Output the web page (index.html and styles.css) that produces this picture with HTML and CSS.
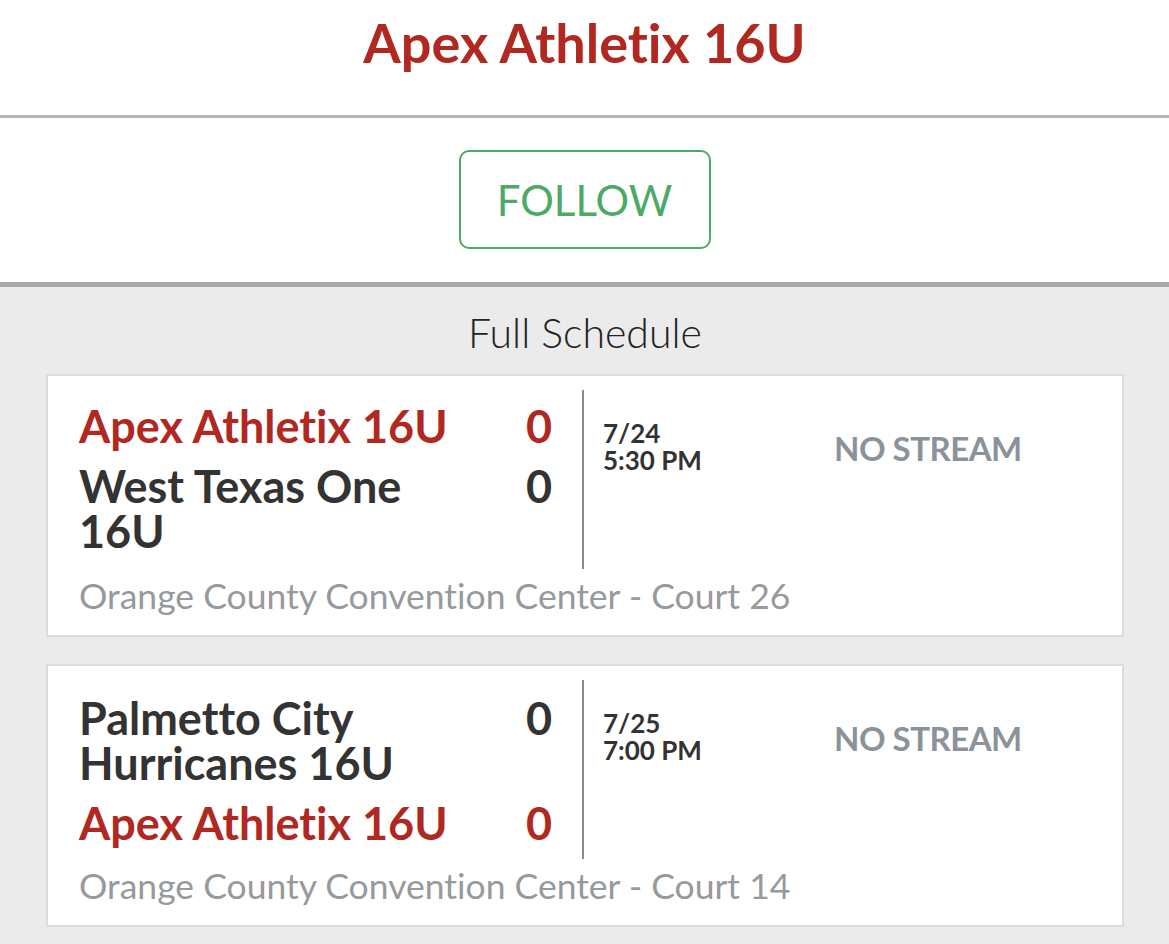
FILE: index.html
```html
<!DOCTYPE html>
<html>
<head>
<meta charset="utf-8">
<title>Apex Athletix 16U</title>
<link rel="stylesheet" href="styles.css">
</head>
<body>
<header class="top">
  <h1 class="title">Apex Athletix 16U</h1>
</header>
<section class="follow-bar">
  <button class="follow-btn">FOLLOW</button>
</section>
<main class="schedule">
  <h2 class="schedule-title">Full Schedule</h2>

  <article class="card">
    <div class="card-main">
      <div class="teams">
        <div class="team team-home">
          <span class="team-name">Apex Athletix 16U</span>
          <span class="team-score">0</span>
        </div>
        <div class="team">
          <span class="team-name">West Texas One 16U</span>
          <span class="team-score">0</span>
        </div>
      </div>
      <div class="info">
        <div class="when">
          <div>7/24</div>
          <div>5:30 PM</div>
        </div>
        <div class="stream">NO STREAM</div>
      </div>
    </div>
    <div class="venue">Orange County Convention Center - Court 26</div>
  </article>

  <article class="card card-second">
    <div class="card-main">
      <div class="teams">
        <div class="team">
          <span class="team-name">Palmetto City Hurricanes 16U</span>
          <span class="team-score">0</span>
        </div>
        <div class="team team-home">
          <span class="team-name">Apex Athletix 16U</span>
          <span class="team-score">0</span>
        </div>
      </div>
      <div class="info">
        <div class="when">
          <div>7/25</div>
          <div>7:00 PM</div>
        </div>
        <div class="stream">NO STREAM</div>
      </div>
    </div>
    <div class="venue">Orange County Convention Center - Court 14</div>
  </article>
</main>
</body>
</html>
```
FILE: styles.css
```css
* { box-sizing: border-box; }

html, body {
  margin: 0;
  padding: 0;
  background: #ebebeb;
  font-family: Lato, "Open Sans", "Liberation Sans", sans-serif;
  font-variant-ligatures: none;
  font-feature-settings: "liga" 0, "clig" 0;
}

.top {
  background: #fff;
  height: 118px;
  padding-top: 13px;
  border-bottom: 3px solid #b3b3b3;
  text-align: center;
}

.title {
  margin: 0;
  font-size: 54px;
  line-height: 60px;
  font-weight: 700;
  color: #b0281f;
}

.follow-bar {
  background: #fff;
  height: 169px;
  padding-top: 32px;
  border-bottom: 5px solid #a9a9a9;
  display: flex;
  justify-content: center;
  align-items: flex-start;
}

.follow-btn {
  width: 252px;
  height: 99px;
  border: 2px solid #4caa66;
  border-radius: 10px;
  background: #fff;
  color: #4caa66;
  font-family: inherit;
  font-size: 42px;
  font-weight: 400;
  padding: 0;
}

.schedule {
  padding: 22px 45px 20px 46px;
}

.schedule-title {
  margin: 0 0 17px;
  text-align: center;
  font-size: 41px;
  line-height: 48px;
  font-weight: 300;
  color: #222;
}

.card {
  background: #fff;
  border: 2px solid #dcdcdc;
  padding: 14px 0 18px 31px;
  margin-bottom: 27px;
}

.card-second .teams {
  padding-top: 16px;
  padding-bottom: 13px;
}

.card-main {
  display: flex;
}

.teams {
  width: 503px;
  padding: 14px 30px 15px 0;
  display: flex;
  flex-direction: column;
  gap: 15px;
}

.team {
  display: flex;
  justify-content: space-between;
  align-items: flex-start;
  font-size: 45px;
  line-height: 45px;
  font-weight: 700;
  color: #333;
}

.team-name {
  max-width: 360px;
}

.team-home { color: #b0281f; }

.team-home .team-name { max-width: none; }

.info {
  flex: 1;
  display: flex;
  border-left: 2px solid #8a8a8a;
  padding-left: 19px;
}

.when {
  flex: 0 0 231px;
  padding-top: 30px;
  font-size: 26px;
  line-height: 27px;
  font-weight: 700;
  color: #333;
}

.stream {
  padding-top: 42px;
  font-size: 33px;
  line-height: 33px;
  font-weight: 700;
  color: #8b9299;
  letter-spacing: -0.5px;
}

.venue {
  margin-top: 6px;
  font-size: 35.5px;
  line-height: 42px;
  color: #97999b;
}
```
